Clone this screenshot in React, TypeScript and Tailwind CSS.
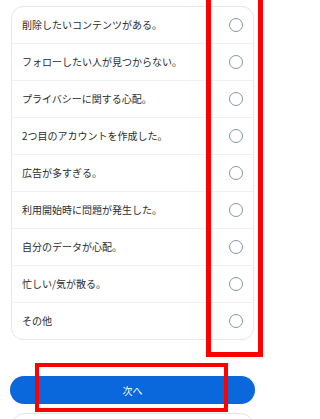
import React from 'react';

const REASONS = [
  '削除したいコンテンツがある。',
  'フォローしたい人が見つからない。',
  'プライバシーに関する心配。',
  '2つ目のアカウントを作成した。',
  '広告が多すぎる。',
  '利用開始時に問題が発生した。',
  '自分のデータが心配。',
  '忙しい/気が散る。',
  'その他',
];

export default function App() {
  return (
    <div
      className="relative w-[265px] h-[419px] overflow-hidden bg-white"
      style={{ fontFamily: '"Noto Sans CJK JP", "Noto Sans", sans-serif' }}
    >
      <div className="flex flex-col px-[10px] pt-[6px]">
        {/* 理由リスト */}
        <div className="mx-[1px] rounded-[12px] border border-[#e4e7eb] bg-white overflow-hidden">
          {REASONS.map((label, idx) => (
            <div
              key={idx}
              className="flex h-[37px] items-center justify-between border-b border-[#eff1f3] pl-[10px] pr-[10px] last:border-b-0 last:h-[36px]"
            >
              <span className="text-[10px] leading-none text-[#2a2d31]">{label}</span>
              <span className="h-[14px] w-[14px] rounded-full border-[1.5px] border-[#8595a8]" />
            </div>
          ))}
        </div>

        <button className="mt-[36px] flex h-[28px] items-center justify-center rounded-full bg-[#0a67dc] text-[10px] text-white">
          次へ
        </button>

        <div className="mx-[2px] mt-[9px] h-[30px] rounded-[12px] border border-[#e2e5e9]" />
      </div>

      {/* 注釈の赤枠 */}
      <div className="absolute left-[206px] top-[-6px] h-[363px] w-[57px] border-[5px] border-[#ff0000]" />
      <div className="absolute left-[35px] top-[363px] h-[49px] w-[193px] border-[4px] border-[#ff0000]" />
    </div>
  );
}
